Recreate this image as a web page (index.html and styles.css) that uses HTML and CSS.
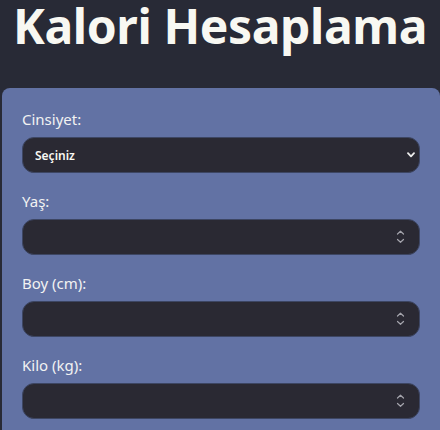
FILE: index.html
```html
<!DOCTYPE html>
<html lang="tr">
<head>
<meta charset="utf-8">
<title>Kalori Hesaplama</title>
<link rel="stylesheet" href="styles.css">
</head>
<body>
<h1 class="title">Kalori Hesaplama</h1>
<form class="card">
  <div class="field">
    <label class="label" for="gender">Cinsiyet:</label>
    <div class="control">
      <select class="input select" id="gender">
        <option>Seçiniz</option>
        <option>Erkek</option>
        <option>Kadın</option>
      </select>
      <svg class="icon chevron" width="8" height="6" viewBox="0 0 8 6"><path d="M1 1.2 L4 4.3 L7 1.2" fill="none" stroke="#ececec" stroke-width="1.8" stroke-linecap="round" stroke-linejoin="round"/></svg>
    </div>
  </div>
  <div class="field">
    <label class="label" for="age">Yaş:</label>
    <div class="control">
      <input class="input" id="age" type="number">
      <svg class="icon spin" width="9" height="14" viewBox="0 0 9 14"><path d="M1.5 4 L4.5 1.2 L7.5 4 M1.5 9.5 L4.5 12.3 L7.5 9.5" fill="none" stroke="#a4a4ac" stroke-width="1.2" stroke-linecap="round" stroke-linejoin="round"/></svg>
    </div>
  </div>
  <div class="field">
    <label class="label" for="height">Boy (cm):</label>
    <div class="control">
      <input class="input" id="height" type="number">
      <svg class="icon spin" width="9" height="14" viewBox="0 0 9 14"><path d="M1.5 4 L4.5 1.2 L7.5 4 M1.5 9.5 L4.5 12.3 L7.5 9.5" fill="none" stroke="#a4a4ac" stroke-width="1.2" stroke-linecap="round" stroke-linejoin="round"/></svg>
    </div>
  </div>
  <div class="field">
    <label class="label" for="weight">Kilo (kg):</label>
    <div class="control">
      <input class="input" id="weight" type="number">
      <svg class="icon spin" width="9" height="14" viewBox="0 0 9 14"><path d="M1.5 4 L4.5 1.2 L7.5 4 M1.5 9.5 L4.5 12.3 L7.5 9.5" fill="none" stroke="#a4a4ac" stroke-width="1.2" stroke-linecap="round" stroke-linejoin="round"/></svg>
    </div>
  </div>
</form>
</body>
</html>
```
FILE: styles.css
```css
html, body {
  margin: 0;
  padding: 0;
  background: #282a36;
  color: #f8f8f2;
  font-family: "Noto Sans", "Open Sans", sans-serif;
  overflow: hidden;
}
.title {
  margin: 0 0 36px;
  text-align: center;
  font-size: 48px;
  line-height: 52px;
  letter-spacing: -0.4px;
  font-weight: 700;
  color: #f8f8f2;
  white-space: nowrap;
}
.card {
  margin: 0 0 0 2px;
  padding: 20px;
  background: #6272a4;
  border-radius: 8px;
  display: flex;
  flex-direction: column;
  gap: 17px;
}
.field {
  display: flex;
  flex-direction: column;
  gap: 7px;
}
.label {
  font-size: 15px;
  line-height: 22px;
  color: #f2f2f2;
}
.control {
  position: relative;
}
.input {
  display: block;
  box-sizing: border-box;
  width: 100%;
  height: 36px;
  margin: 0;
  padding: 0 12px;
  border: 1px solid #3d4663;
  border-radius: 12px;
  background: #2a2933;
  color: #f8f8f2;
  font-family: "Noto Sans", "Open Sans", sans-serif;
  font-size: 12px;
  font-weight: 600;
  outline: none;
  appearance: none;
  -webkit-appearance: none;
  -moz-appearance: textfield;
}
.input::-webkit-outer-spin-button,
.input::-webkit-inner-spin-button {
  -webkit-appearance: none;
  margin: 0;
}
.icon {
  position: absolute;
  pointer-events: none;
  top: 50%;
  transform: translateY(-50%);
}
.chevron {
  right: 5px;
}
.spin {
  right: 15px;
}
```
